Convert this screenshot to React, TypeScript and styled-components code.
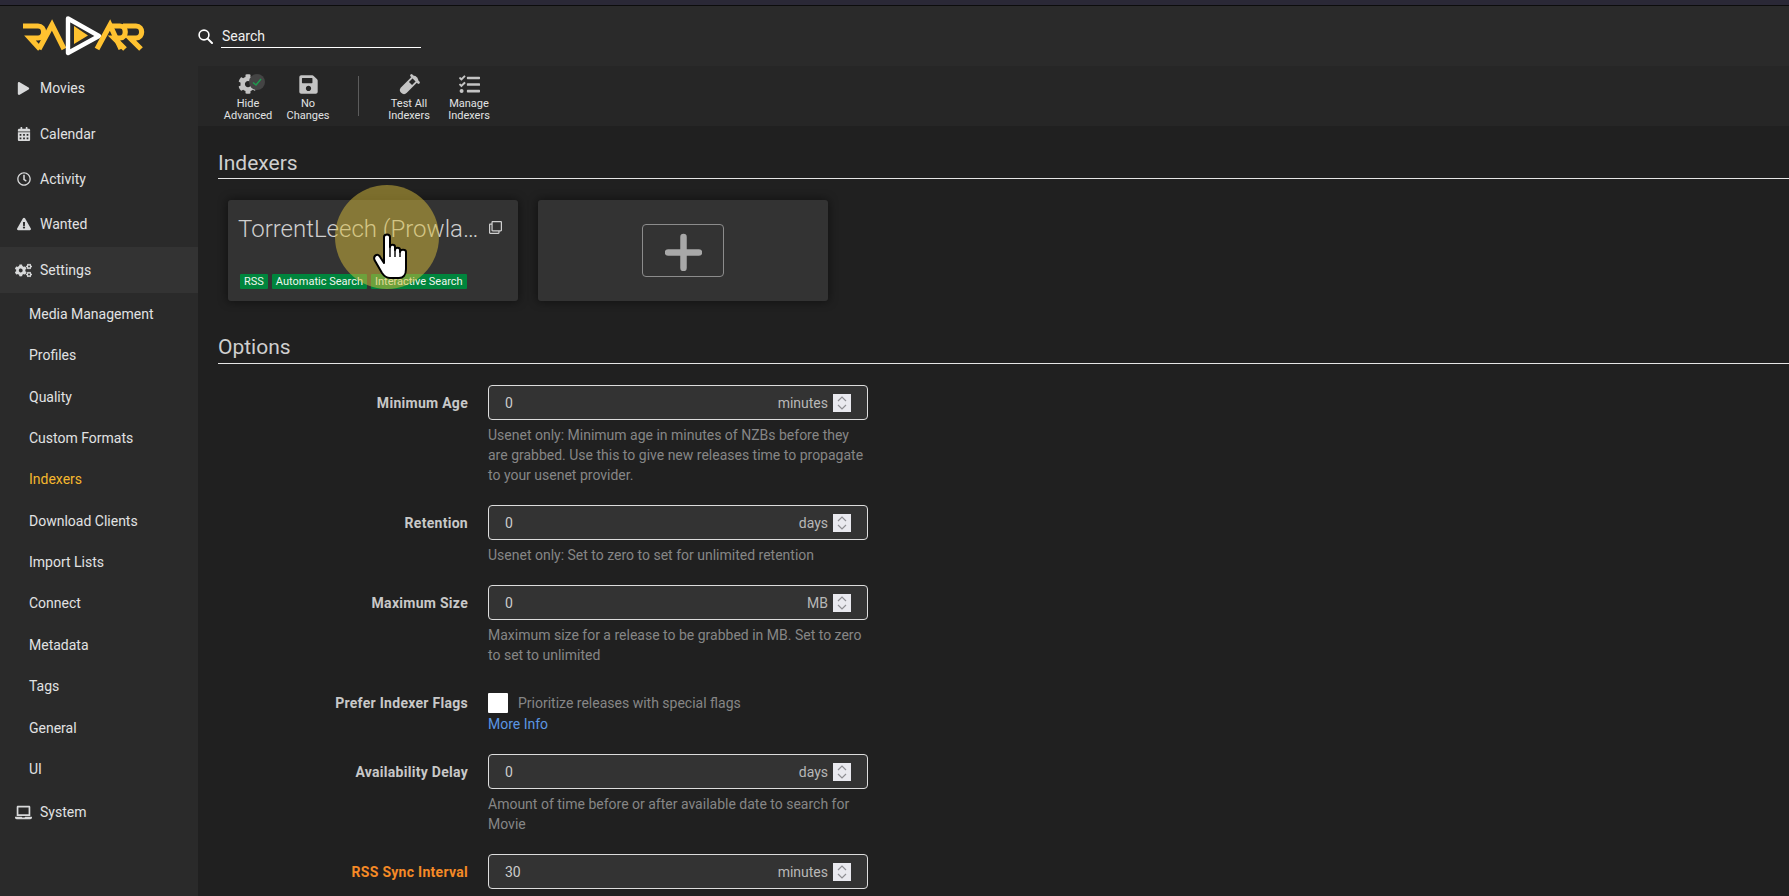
import * as React from 'react';
import styled, { createGlobalStyle } from 'styled-components';
import {
  FaCalendarAlt,
  FaCog,
  FaCogs,
  FaExclamationTriangle,
  FaLaptop,
  FaPlay,
  FaRegClock,
  FaRegClone,
  FaSave,
  FaTasks,
} from 'react-icons/fa';

const GlobalStyle = createGlobalStyle`
  html, body {
    margin: 0;
    height: 100%;
    overflow: hidden;
    background: #202020;
    font-family: Roboto, "Liberation Sans", sans-serif;
    font-size: 14px;
  }
  * { box-sizing: border-box; }
`;

const Page = styled.div`
  display: flex;
  flex-direction: column;
  height: 896px;
  overflow: hidden;
`;

const TopStrip = styled.div`
  flex: 0 0 6px;
  background: #2a2836;
  border-bottom: 1px solid #0c0c0c;
`;

const Header = styled.header`
  flex: 0 0 60px;
  display: flex;
  align-items: center;
  background: #2a2a2a;
`;

const LogoBox = styled.div`
  flex: 0 0 198px;
  padding: 0 0 0 23px;
  display: flex;
  align-items: center;
`;

const SearchBox = styled.div`
  display: flex;
  align-items: center;
  gap: 8px;
  color: #fff;
`;

const SearchInput = styled.input`
  width: 200px;
  height: 23px;
  margin-top: 1px;
  padding: 0 1px 1px;
  border: 0;
  border-bottom: 1px solid #fff;
  background: transparent;
  color: #fff;
  font: 14px Roboto, sans-serif;
  outline: none;

  &::placeholder {
    color: #f0f0f0;
    opacity: 1;
  }
`;

const Body = styled.div`
  flex: 1;
  display: flex;
  min-height: 0;
`;

const Sidebar = styled.nav`
  flex: 0 0 198px;
  margin-top: -0.5px;
  background: #2a2a2a;
`;

const NavItem = styled.div<{ $active?: boolean }>`
  height: ${(p) => (p.$active ? '46px' : '45.4px')};
  display: flex;
  align-items: center;
  gap: 8px;
  padding-left: 15px;
  color: #e1e2e3;
  background: ${(p) => (p.$active ? '#333333' : 'transparent')};
`;

const NavIcon = styled.span`
  flex: 0 0 17px;
  display: flex;
  justify-content: center;
  color: #d8d9da;
`;

const SubItem = styled.div<{ $active?: boolean }>`
  height: 41.4px;
  display: flex;
  align-items: center;
  padding-left: 29px;
  color: ${(p) => (p.$active ? '#f5b82e' : '#e1e2e3')};
`;

const Main = styled.main`
  flex: 1;
  min-width: 0;
  display: flex;
  flex-direction: column;
`;

const Toolbar = styled.div`
  flex: 0 0 60px;
  display: flex;
  align-items: center;
  padding-left: 20px;
  background: #262626;
`;

const ToolButton = styled.div`
  width: 60px;
  padding-top: 3px;
  display: flex;
  flex-direction: column;
  align-items: center;
  color: #e1e2e3;
`;

const ToolIcon = styled.span`
  position: relative;
  height: 22px;
  margin-bottom: 3px;
  display: flex;
  align-items: center;
  justify-content: center;
  color: #c4c4c4;
`;

const ToolLabel = styled.span`
  font-size: 11px;
  line-height: 12px;
  text-align: center;
`;

const ToolSeparator = styled.div`
  width: 1px;
  height: 40px;
  margin: 0 20px;
  background: #5c5c5c;
`;

const AdvancedCog = styled(FaCog)`
  margin-right: 1px;
`;

const AdvancedBadge = styled.span`
  position: absolute;
  left: 11px;
  top: 1px;
  width: 16px;
  height: 16px;
  border-radius: 50%;
  background: #444;
  display: flex;
  align-items: center;
  justify-content: center;
`;

const Content = styled.div`
  flex: 1;
  overflow: hidden;
  padding: 22px 0 0 20px;
  background: #202020;
`;

const Legend = styled.div<{ $tall?: boolean }>`
  height: ${(p) => (p.$tall ? '32px' : '31px')};
  margin-bottom: 21px;
  font-size: 21px;
  line-height: 30px;
  color: #cfcfcf;
  border-bottom: 1px solid #e5e5e5;
`;

const CardRow = styled.div`
  display: flex;
  gap: 20px;
  margin: 10px 0 31px 10px;
`;

const Card = styled.div`
  position: relative;
  width: 290px;
  height: 101px;
  display: flex;
  flex-direction: column;
  padding: 10px 10px 12px;
  border-radius: 3px;
  background: #333;
  box-shadow: 0 0 10px 1px rgba(0, 0, 0, 0.45);
`;

const AddCard = styled(Card)`
  align-items: center;
  justify-content: center;
  padding: 0;
`;

const AddButton = styled.div`
  width: 82px;
  height: 53px;
  display: flex;
  align-items: center;
  justify-content: center;
  border: 1px solid #8c8c8c;
  border-radius: 4px;
`;

const CardHeader = styled.div`
  display: flex;
  align-items: center;
  gap: 10px;
  height: 35px;
  color: #cfcfcf;
`;

const CardTitle = styled.div`
  width: 241px;
  padding-top: 3px;
  font-size: 24px;
  font-weight: 300;
  line-height: 35px;
  white-space: nowrap;
  overflow: hidden;
  text-overflow: ellipsis;
`;

const LabelRow = styled.div`
  display: flex;
  gap: 4px;
  margin-top: auto;
  padding-left: 2px;
`;

const Tag = styled.span`
  height: 15px;
  padding: 0 4px;
  font-size: 11px;
  line-height: 15px;
  border-radius: 1px;
  color: #eef5ee;
  background: #00853d;
`;

const Spotlight = styled.div`
  position: absolute;
  left: 107px;
  top: -15px;
  width: 104px;
  height: 104px;
  border-radius: 50%;
  background: rgba(218, 190, 60, 0.5);
`;

const Pointer = styled.svg`
  position: absolute;
  left: 145px;
  top: 33px;
`;

const FormGroup = styled.div`
  display: grid;
  grid-template-columns: 250px 380px;
  column-gap: 20px;
  margin-bottom: 20px;
`;

const FieldLabel = styled.label<{ $warn?: boolean }>`
  font-weight: 700;
  line-height: 37px;
  letter-spacing: 0.28px;
  text-align: right;
  color: ${(p) => (p.$warn ? '#f58a26' : '#c8c8c8')};
`;

const Field = styled.div`
  height: 35px;
  display: flex;
  align-items: center;
  padding: 0 16px 0 16px;
  border: 1px solid #dddddd;
  border-radius: 4px;
  background: #333;
  color: #cccccc;
`;

const FieldValue = styled.span`
  flex: 1;
`;

const Unit = styled.span`
  margin-right: 5px;
  color: #b8b8b8;
`;

const Spinner = styled.span`
  width: 18px;
  height: 18px;
  display: flex;
  align-items: center;
  justify-content: center;
  background: #e9e9ef;
`;

const HelpText = styled.div`
  margin-top: 5px;
  line-height: 20px;
  color: #868686;
`;

const CheckRow = styled.div`
  height: 35px;
  display: flex;
  align-items: center;
  gap: 10px;
  color: #868686;
`;

const CheckBox = styled.span`
  width: 20px;
  height: 20px;
  border-radius: 1px;
  background: #fff;
`;

const MoreInfo = styled.a`
  display: block;
  margin-top: -6px;
  line-height: 20px;
  color: #5b96e2;
`;

function Logo() {
  const letter = { fill: 'none', stroke: '#ffc230', strokeWidth: 5.2 };
  return (
    <svg width="122" height="42" viewBox="0 0 122 42">
      <path d="M0 11 H15 C22.5 11 22.5 23 15 23 H7 L17 34" {...letter} />
      <path d="M16 34 L29 10 L41 34" {...letter} />
      <path d="M45 3.5 L76 21 L45 38 Z" fill="none" stroke="#fff" strokeWidth="4.4" strokeLinejoin="round" />
      <path d="M51 11 L65 20.5 L51 29 Z" fill="#ffc230" />
      <path d="M74 34 L87 10 L98 34" {...letter} />
      <path d="M86 11 H97 C104 11 104 23 97 23 H91 L102 34" {...letter} />
      <path d="M100 11 H113 C120.5 11 120.5 23 113 23 H107 L118 34" {...letter} />
    </svg>
  );
}

function SearchIcon() {
  return (
    <svg width="15" height="15" viewBox="0 0 15 15">
      <circle cx="6" cy="6" r="4.9" fill="none" stroke="#fff" strokeWidth="1.6" />
      <path d="M9.6 9.6 L14 14" stroke="#fff" strokeWidth="2" strokeLinecap="round" />
    </svg>
  );
}

function VialIcon() {
  return (
    <svg width="21" height="21" viewBox="0 0 21 21">
      <path d="M15 6 L5 16" stroke="#c4c4c4" strokeWidth="8" strokeLinecap="round" />
      <path d="M15.5 5.5 L11.5 9.5" stroke="#262626" strokeWidth="4.4" />
      <path d="M12.5 1.5 L19.5 8.5" stroke="#c4c4c4" strokeWidth="2.6" strokeLinecap="round" />
    </svg>
  );
}

function HandPointer() {
  return (
    <Pointer width="36" height="46" viewBox="0 0 36 46">
      <path
        d="M11 4 C11 0.5 17 0.5 17 4 L17 14 C17 11 22 11 22 14 L22 17 C22 14 27 14 27 17 L27 19 C27 16 33 16 33 19 L33 36 C33 42 30 45 26 45 L17 45 C13 45 11 43 9 40 L1.5 27 C0 23 4 20 6.5 23 L11 30 Z"
        fill="#fff"
        stroke="#000"
        strokeWidth="2"
        strokeLinejoin="round"
      />
      <path d="M17 14 V24 M22 16 V24 M27 18 V24" stroke="#000" strokeWidth="1.4" fill="none" />
    </Pointer>
  );
}

function SpinnerArrows() {
  return (
    <Spinner>
      <svg width="12" height="16" viewBox="0 0 12 16">
        <path d="M2 6 L6 2 L10 6 M2 10 L6 14 L10 10" fill="none" stroke="#8f8f94" strokeWidth="1.2" />
      </svg>
    </Spinner>
  );
}

function NumberField({ value, unit }: { value: string; unit: string }) {
  return (
    <Field>
      <FieldValue>{value}</FieldValue>
      <Unit>{unit}</Unit>
      <SpinnerArrows />
    </Field>
  );
}

const subItems = [
  'Media Management',
  'Profiles',
  'Quality',
  'Custom Formats',
  'Indexers',
  'Download Clients',
  'Import Lists',
  'Connect',
  'Metadata',
  'Tags',
  'General',
  'UI',
];

const tags = ['RSS', 'Automatic Search', 'Interactive Search'];

export default function App() {
  return (
    <Page>
      <GlobalStyle />
      <TopStrip />
      <Header>
        <LogoBox>
          <Logo />
        </LogoBox>
        <SearchBox>
          <SearchIcon />
          <SearchInput placeholder="Search" />
        </SearchBox>
      </Header>
      <Body>
        <Sidebar>
          <NavItem>
            <NavIcon><FaPlay size={13} /></NavIcon>
            Movies
          </NavItem>
          <NavItem>
            <NavIcon><FaCalendarAlt size={14} /></NavIcon>
            Calendar
          </NavItem>
          <NavItem>
            <NavIcon><FaRegClock size={14} /></NavIcon>
            Activity
          </NavItem>
          <NavItem>
            <NavIcon><FaExclamationTriangle size={14} /></NavIcon>
            Wanted
          </NavItem>
          <NavItem $active>
            <NavIcon><FaCogs size={17} /></NavIcon>
            Settings
          </NavItem>
          {subItems.map((item) => (
            <SubItem key={item} $active={item === 'Indexers'}>
              {item}
            </SubItem>
          ))}
          <NavItem>
            <NavIcon><FaLaptop size={17} /></NavIcon>
            System
          </NavItem>
        </Sidebar>
        <Main>
          <Toolbar>
            <ToolButton>
              <ToolIcon>
                <AdvancedCog size={20} />
                <AdvancedBadge>
                  <svg width="10" height="10" viewBox="0 0 10 10">
                    <path d="M1 5.5 L4 8 L9 2" fill="none" stroke="#1f9a4f" strokeWidth="1.5" />
                  </svg>
                </AdvancedBadge>
              </ToolIcon>
              <ToolLabel>Hide<br />Advanced</ToolLabel>
            </ToolButton>
            <ToolButton>
              <ToolIcon><FaSave size={21} /></ToolIcon>
              <ToolLabel>No<br />Changes</ToolLabel>
            </ToolButton>
            <ToolSeparator />
            <ToolButton>
              <ToolIcon><VialIcon /></ToolIcon>
              <ToolLabel>Test All<br />Indexers</ToolLabel>
            </ToolButton>
            <ToolButton>
              <ToolIcon><FaTasks size={21} /></ToolIcon>
              <ToolLabel>Manage<br />Indexers</ToolLabel>
            </ToolButton>
          </Toolbar>
          <Content>
            <Legend>Indexers</Legend>
            <CardRow>
              <Card>
                <CardHeader>
                  <CardTitle>TorrentLeech (Prowlarr)</CardTitle>
                  <FaRegClone size={13} />
                </CardHeader>
                <LabelRow>
                  {tags.map((tag) => (
                    <Tag key={tag}>{tag}</Tag>
                  ))}
                </LabelRow>
                <Spotlight />
                <HandPointer />
              </Card>
              <AddCard>
                <AddButton>
                  <svg width="37" height="41" viewBox="0 0 37 41">
                    <path d="M18.5 7 V38 M3 22.5 H34" stroke="#a8a8a8" strokeWidth="6.5" strokeLinecap="round" />
                  </svg>
                </AddButton>
              </AddCard>
            </CardRow>
            <Legend $tall>Options</Legend>
            <FormGroup>
              <FieldLabel>Minimum Age</FieldLabel>
              <div>
                <NumberField value="0" unit="minutes" />
                <HelpText>
                  Usenet only: Minimum age in minutes of NZBs before they are grabbed. Use this to give new releases time to propagate to your usenet provider.
                </HelpText>
              </div>
            </FormGroup>
            <FormGroup>
              <FieldLabel>Retention</FieldLabel>
              <div>
                <NumberField value="0" unit="days" />
                <HelpText>Usenet only: Set to zero to set for unlimited retention</HelpText>
              </div>
            </FormGroup>
            <FormGroup>
              <FieldLabel>Maximum Size</FieldLabel>
              <div>
                <NumberField value="0" unit="MB" />
                <HelpText>Maximum size for a release to be grabbed in MB. Set to zero to set to unlimited</HelpText>
              </div>
            </FormGroup>
            <FormGroup>
              <FieldLabel>Prefer Indexer Flags</FieldLabel>
              <div>
                <CheckRow>
                  <CheckBox />
                  Prioritize releases with special flags
                </CheckRow>
                <MoreInfo>More Info</MoreInfo>
              </div>
            </FormGroup>
            <FormGroup>
              <FieldLabel>Availability Delay</FieldLabel>
              <div>
                <NumberField value="0" unit="days" />
                <HelpText>Amount of time before or after available date to search for Movie</HelpText>
              </div>
            </FormGroup>
            <FormGroup>
              <FieldLabel $warn>RSS Sync Interval</FieldLabel>
              <div>
                <NumberField value="30" unit="minutes" />
              </div>
            </FormGroup>
          </Content>
        </Main>
      </Body>
    </Page>
  );
}
